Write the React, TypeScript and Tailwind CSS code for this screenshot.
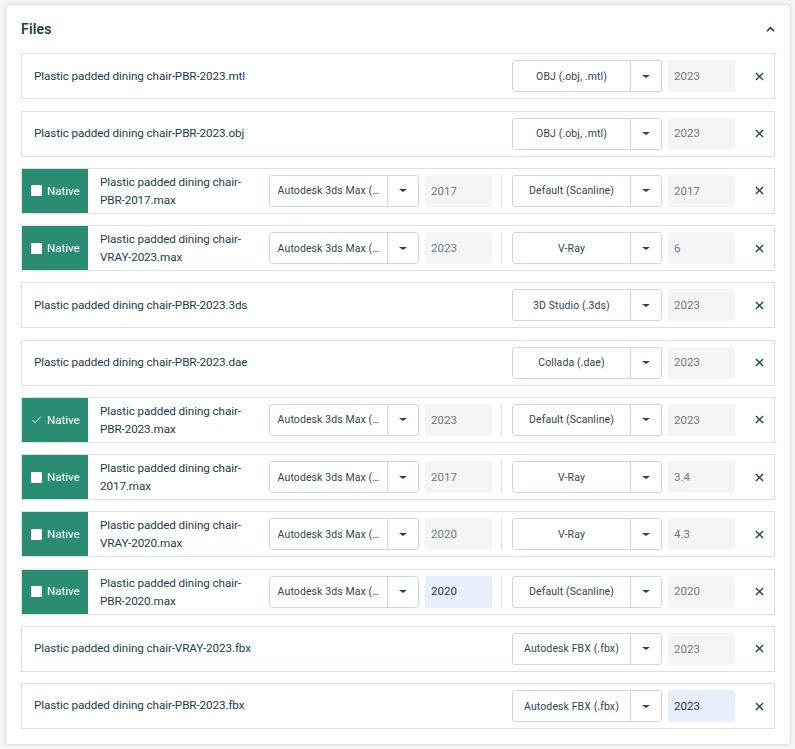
const font = { fontFamily: 'Roboto, "Noto Sans", "Liberation Sans", sans-serif' };

interface FileRow {
  name: string;
  format: string;
  version: string;
  versionActive?: boolean;
  native?: {
    checked?: boolean;
    appVersion: string;
    appActive?: boolean;
  };
}

const rows: FileRow[] = [
  { name: "Plastic padded dining chair-PBR-2023.mtl", format: "OBJ (.obj, .mtl)", version: "2023" },
  { name: "Plastic padded dining chair-PBR-2023.obj", format: "OBJ (.obj, .mtl)", version: "2023" },
  { name: "Plastic padded dining chair-PBR-2017.max", format: "Default (Scanline)", version: "2017", native: { appVersion: "2017" } },
  { name: "Plastic padded dining chair-VRAY-2023.max", format: "V-Ray", version: "6", native: { appVersion: "2023" } },
  { name: "Plastic padded dining chair-PBR-2023.3ds", format: "3D Studio (.3ds)", version: "2023" },
  { name: "Plastic padded dining chair-PBR-2023.dae", format: "Collada (.dae)", version: "2023" },
  { name: "Plastic padded dining chair-PBR-2023.max", format: "Default (Scanline)", version: "2023", native: { checked: true, appVersion: "2023" } },
  { name: "Plastic padded dining chair-2017.max", format: "V-Ray", version: "3.4", native: { appVersion: "2017" } },
  { name: "Plastic padded dining chair-VRAY-2020.max", format: "V-Ray", version: "4.3", native: { appVersion: "2020" } },
  { name: "Plastic padded dining chair-PBR-2020.max", format: "Default (Scanline)", version: "2020", native: { appVersion: "2020", appActive: true } },
  { name: "Plastic padded dining chair-VRAY-2023.fbx", format: "Autodesk FBX (.fbx)", version: "2023" },
  { name: "Plastic padded dining chair-PBR-2023.fbx", format: "Autodesk FBX (.fbx)", version: "2023", versionActive: true },
];

function Select({ label }: { label: string }) {
  return (
    <div className="flex h-[32px] w-[150px] shrink-0 rounded-[3px] border border-[#cfd9dd] bg-white">
      <div className="flex w-[118px] items-center justify-center overflow-hidden whitespace-nowrap border-r border-[#cfd9dd] pt-[1px] text-[10.5px] tracking-[0.1px] text-[#33454d]">
        {label}
      </div>
      <div className="flex flex-1 items-center justify-center">
        <div className="h-0 w-0 border-x-[4px] border-t-[3px] border-x-transparent border-t-[#2d3f47]" />
      </div>
    </div>
  );
}

function VersionInput({ value, active }: { value: string; active?: boolean }) {
  return (
    <div
      className={
        active
          ? "flex h-[32px] w-[67px] shrink-0 items-center rounded-[3px] bg-[#e6effb] pl-[6px] pt-[1px] text-[11.5px] text-[#1f3a46]"
          : "flex h-[32px] w-[67px] shrink-0 items-center rounded-[3px] bg-[#f5f5f5] pl-[6px] pt-[1px] text-[11.5px] text-[#6d7a80]"
      }
    >
      {value}
    </div>
  );
}

function Row({ row }: { row: FileRow }) {
  return (
    <div className="flex h-[46px] items-center border border-[#d8e1e4] bg-white">
      {row.native ? (
        <>
          <div className="flex h-full w-[66px] shrink-0 items-center bg-[#2a8c73] text-[11.5px] text-white">
            {row.native.checked ? (
              <svg className="ml-[9px] h-[11px] w-[11px]" viewBox="0 0 12 12" fill="none" stroke="white" strokeWidth="1">
                <path d="M1.5 6.5 L4.5 9.5 L10.5 3" />
              </svg>
            ) : (
              <div className="ml-[9px] h-[11px] w-[11px] rounded-[1px] bg-white" />
            )}
            <span className="ml-[5px] pt-[1px]">Native</span>
          </div>
          <div className="ml-[12px] w-[155px] shrink-0 text-[11.7px] leading-[18px] tracking-[-0.1px] text-[#1c3d4a]">{row.name}</div>
          <div className="ml-[14px]">
            <Select label="Autodesk 3ds Max (…" />
          </div>
          <div className="ml-[6px]">
            <VersionInput value={row.native.appVersion} active={row.native.appActive} />
          </div>
          <div className="ml-[9px] h-[32px] w-px bg-[#d8e1e4]" />
          <div className="ml-[10px]">
            <Select label={row.format} />
          </div>
        </>
      ) : (
        <>
          <div className="ml-[12px] flex-1 whitespace-nowrap text-[11.7px] tracking-[-0.1px] text-[#1c3d4a]">{row.name}</div>
          <Select label={row.format} />
        </>
      )}
      <div className="ml-[6px]">
        <VersionInput value={row.version} active={row.versionActive} />
      </div>
      <div className="flex w-[39px] shrink-0 items-center justify-end pr-[10px]">
        <svg className="h-[9px] w-[9px] shrink-0" viewBox="0 0 10 10" fill="none" stroke="#1c4452" strokeWidth="1.5">
          <path d="M1 1 L9 9 M9 1 L1 9" />
        </svg>
      </div>
    </div>
  );
}

export default function App() {
  return (
    <div className="h-[749px] w-[795px] overflow-hidden bg-[#f3f5f6] pl-[6px] pr-[5px] pt-[5px]" style={font}>
      <div className="h-[739px] rounded-[2px] bg-white px-[15px] shadow-[0_0_3px_rgba(120,140,150,0.45)]">
        <div className="flex h-[48.3px] items-center justify-between">
          <h2 className="text-[14px] font-semibold tracking-[0.2px] text-[#1c3d4a]">Files</h2>
          <svg className="h-[7px] w-[9px]" viewBox="0 0 10 7" fill="none" stroke="#1c4452" strokeWidth="1.8">
            <path d="M1 5.5 L5 1.5 L9 5.5" />
          </svg>
        </div>
        <div className="flex flex-col gap-[11.25px]">
          {rows.map((r) => (
            <Row key={r.name} row={r} />
          ))}
        </div>
      </div>
    </div>
  );
}
